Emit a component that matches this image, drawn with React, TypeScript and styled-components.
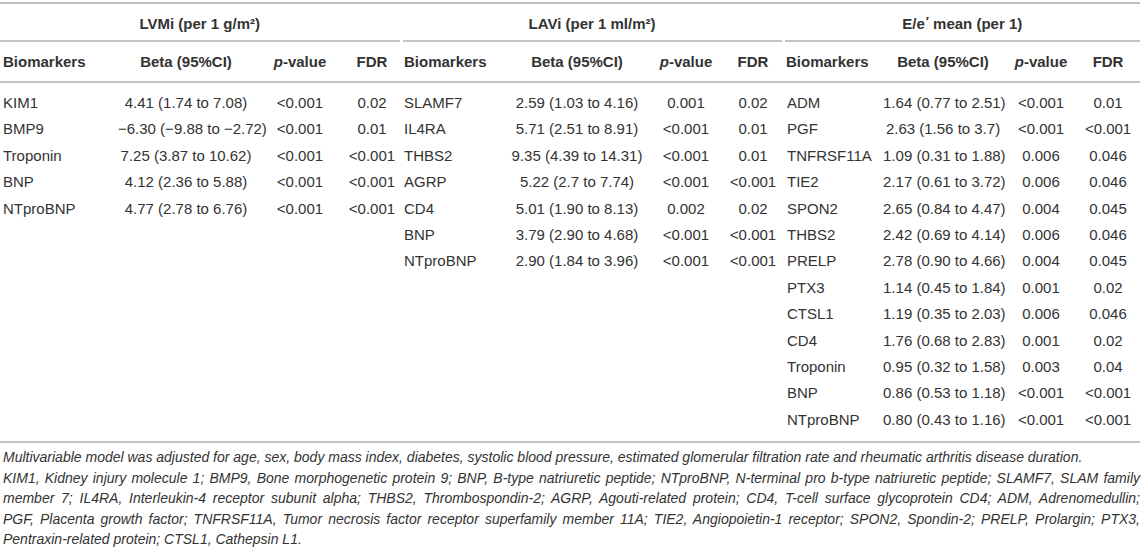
import React from "react";
import styled, { createGlobalStyle } from "styled-components";

const GlobalStyle = createGlobalStyle`
  html, body {
    margin: 0;
    padding: 0;
    background: #ffffff;
  }
  body {
    font-family: "Liberation Sans", Arial, sans-serif;
    color: #333333;
  }
`;

const LINE = "#c4c4c4";

const Prime = styled.span`
  position: relative;
  top: -3px;
  font-size: 13px;
  margin-left: 1px;
`;

type Row = [string, string, string, string];

type Group = {
  title: React.ReactNode;
  rows: Row[];
};

const groups: Group[] = [
  {
    title: <>LVMi (per 1 g/m²)</>,
    rows: [
      ["KIM1", "4.41 (1.74 to 7.08)", "<0.001", "0.02"],
      ["BMP9", "\u22126.30 (\u22129.88 to \u22122.72)", "<0.001", "0.01"],
      ["Troponin", "7.25 (3.87 to 10.62)", "<0.001", "<0.001"],
      ["BNP", "4.12 (2.36 to 5.88)", "<0.001", "<0.001"],
      ["NTproBNP", "4.77 (2.78 to 6.76)", "<0.001", "<0.001"],
    ],
  },
  {
    title: <>LAVi (per 1 ml/m²)</>,
    rows: [
      ["SLAMF7", "2.59 (1.03 to 4.16)", "0.001", "0.02"],
      ["IL4RA", "5.71 (2.51 to 8.91)", "<0.001", "0.01"],
      ["THBS2", "9.35 (4.39 to 14.31)", "<0.001", "0.01"],
      ["AGRP", "5.22 (2.7 to 7.74)", "<0.001", "<0.001"],
      ["CD4", "5.01 (1.90 to 8.13)", "0.002", "0.02"],
      ["BNP", "3.79 (2.90 to 4.68)", "<0.001", "<0.001"],
      ["NTproBNP", "2.90 (1.84 to 3.96)", "<0.001", "<0.001"],
    ],
  },
  {
    title: <>E/e<Prime>′</Prime> mean (per 1)</>,
    rows: [
      ["ADM", "1.64 (0.77 to 2.51)", "<0.001", "0.01"],
      ["PGF", "2.63 (1.56 to 3.7)", "<0.001", "<0.001"],
      ["TNFRSF11A", "1.09 (0.31 to 1.88)", "0.006", "0.046"],
      ["TIE2", "2.17 (0.61 to 3.72)", "0.006", "0.046"],
      ["SPON2", "2.65 (0.84 to 4.47)", "0.004", "0.045"],
      ["THBS2", "2.42 (0.69 to 4.14)", "0.006", "0.046"],
      ["PRELP", "2.78 (0.90 to 4.66)", "0.004", "0.045"],
      ["PTX3", "1.14 (0.45 to 1.84)", "0.001", "0.02"],
      ["CTSL1", "1.19 (0.35 to 2.03)", "0.006", "0.046"],
      ["CD4", "1.76 (0.68 to 2.83)", "0.001", "0.02"],
      ["Troponin", "0.95 (0.32 to 1.58)", "0.003", "0.04"],
      ["BNP", "0.86 (0.53 to 1.18)", "<0.001", "<0.001"],
      ["NTproBNP", "0.80 (0.43 to 1.16)", "<0.001", "<0.001"],
    ],
  },
];

// column widths, 4 per group
const colWidths = [115, 142, 86, 58, 104, 144, 74, 60, 97, 126, 70, 64];

const footLines: { text: string; justify: boolean }[] = [
  {
    text: "Multivariable model was adjusted for age, sex, body mass index, diabetes, systolic blood pressure, estimated glomerular filtration rate and rheumatic arthritis disease duration.",
    justify: false,
  },
  {
    text: "KIM1, Kidney injury molecule 1; BMP9, Bone morphogenetic protein 9; BNP, B-type natriuretic peptide; NTproBNP, N-terminal pro b-type natriuretic peptide; SLAMF7, SLAM family",
    justify: true,
  },
  {
    text: "member 7; IL4RA, Interleukin-4 receptor subunit alpha; THBS2, Thrombospondin-2; AGRP, Agouti-related protein; CD4, T-cell surface glycoprotein CD4; ADM, Adrenomedullin;",
    justify: true,
  },
  {
    text: "PGF, Placenta growth factor; TNFRSF11A, Tumor necrosis factor receptor superfamily member 11A; TIE2, Angiopoietin-1 receptor; SPON2, Spondin-2; PRELP, Prolargin; PTX3,",
    justify: true,
  },
  {
    text: "Pentraxin-related protein; CTSL1, Cathepsin L1.",
    justify: false,
  },
];

const Page = styled.div`
  width: 1143px;
  height: 549px;
  overflow: hidden;
  padding-top: 2px;
  box-sizing: border-box;
`;

const Table = styled.table`
  width: 1140px;
  table-layout: fixed;
  border-collapse: collapse;
  border-top: 2px solid #bdbdbd;
  border-bottom: 2px solid ${LINE};
  font-size: 15px;
  color: #333;
`;

const GroupCell = styled.th`
  padding: 0 1.5px;
  font-weight: bold;
  &:first-child {
    padding-left: 0;
  }
  &:last-child {
    padding-right: 0;
  }
`;

const GroupTitle = styled.div`
  height: 32px;
  padding-top: 4px;
  line-height: 32px;
  text-align: center;
  border-bottom: 2px solid ${LINE};
  white-space: nowrap;
`;

const HeadRow = styled.tr`
  border-bottom: 2px solid ${LINE};
`;

const HeadCell = styled.th<{ $left?: boolean }>`
  height: 39px;
  padding: 0 3px;
  font-weight: bold;
  text-align: ${(p) => (p.$left ? "left" : "center")};
  white-space: nowrap;
`;

const BodyRow = styled.tr`
  &:first-child td {
    padding-top: 7px;
  }
  &:last-child td {
    padding-bottom: 8px;
  }
`;

const Cell = styled.td<{ $left?: boolean; $indent?: number }>`
  height: 26.4px;
  line-height: 26.4px;
  padding: 0 3px 0 ${(p) => p.$indent ?? 3}px;
  text-align: ${(p) => (p.$left ? "left" : "center")};
  white-space: nowrap;
  vertical-align: middle;
`;

const Footnote = styled.div`
  width: 1140px;
  padding: 4px 0 0 3px;
  box-sizing: border-box;
  font-size: 14px;
  font-style: italic;
  line-height: 20.5px;
  color: #333;
`;

const FootLine = styled.div<{ $justify: boolean }>`
  white-space: ${(p) => (p.$justify ? "normal" : "nowrap")};
  text-align: ${(p) => (p.$justify ? "justify" : "left")};
  text-align-last: ${(p) => (p.$justify ? "justify" : "left")};
`;

export default function App() {
  const rowCount = Math.max(...groups.map((g) => g.rows.length));
  return (
    <Page>
      <GlobalStyle />
      <Table>
        <colgroup>
          {colWidths.map((w, i) => (
            <col key={i} style={{ width: w }} />
          ))}
        </colgroup>
        <thead>
          <tr>
            {groups.map((g, i) => (
              <GroupCell key={i} colSpan={4}>
                <GroupTitle>{g.title}</GroupTitle>
              </GroupCell>
            ))}
          </tr>
          <HeadRow>
            {groups.map((_, i) => (
              <React.Fragment key={i}>
                <HeadCell $left>Biomarkers</HeadCell>
                <HeadCell>Beta (95%CI)</HeadCell>
                <HeadCell>
                  <i>p</i>-value
                </HeadCell>
                <HeadCell>FDR</HeadCell>
              </React.Fragment>
            ))}
          </HeadRow>
        </thead>
        <tbody>
          {Array.from({ length: rowCount }).map((_, r) => (
            <BodyRow key={r}>
              {groups.map((g, gi) => {
                const row = g.rows[r];
                return (
                  <React.Fragment key={gi}>
                    <Cell $left $indent={gi === 2 ? 4 : 3}>
                      {row ? row[0] : ""}
                    </Cell>
                    <Cell>{row ? row[1] : ""}</Cell>
                    <Cell>{row ? row[2] : ""}</Cell>
                    <Cell>{row ? row[3] : ""}</Cell>
                  </React.Fragment>
                );
              })}
            </BodyRow>
          ))}
        </tbody>
      </Table>
      <Footnote>
        {footLines.map((l, i) => (
          <FootLine key={i} $justify={l.justify}>
            {l.text}
          </FootLine>
        ))}
      </Footnote>
    </Page>
  );
}
